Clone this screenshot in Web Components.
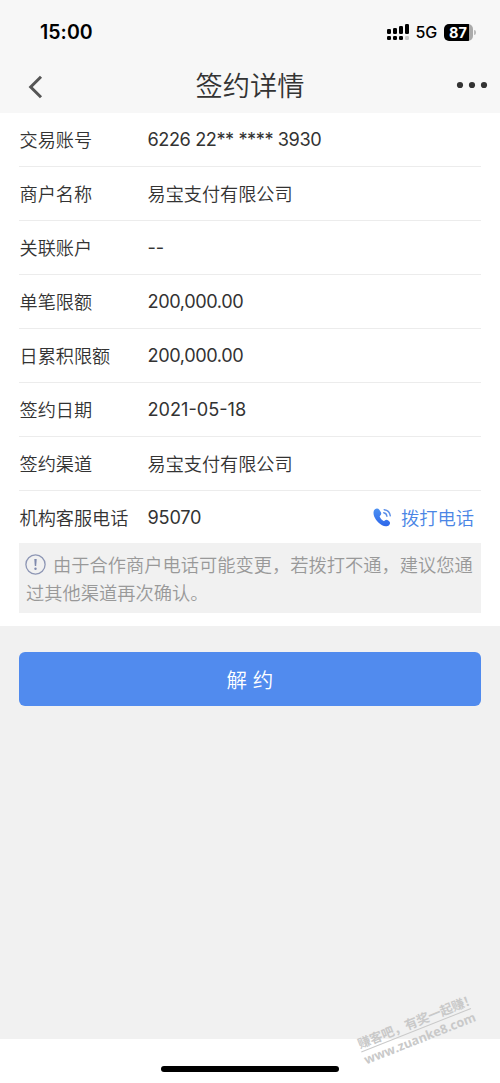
<!DOCTYPE html>
<html lang="zh-CN">
<head>
<meta charset="utf-8">
<title>签约详情</title>
<style>
html,body{margin:0;height:100%;background:#f1f1f1}
</style>
</head>
<body>
<contract-page></contract-page>
<script>
const define = (name, html) => customElements.define(name, class extends HTMLElement {
  constructor() {
    super();
    const t = document.createElement('template');
    t.innerHTML = html;
    this.attachShadow({mode: 'open'}).append(t.content.cloneNode(true));
  }
});

define('status-bar', `
<style>
:host{display:flex;justify-content:space-between;align-items:center;height:64px;padding:0 24px 0 40px;box-sizing:border-box;color:#000;font-family:Inter,"Liberation Sans",sans-serif}
.time{font-size:19.5px;font-weight:600;letter-spacing:.05px}
.right{display:flex;align-items:center}
.net{font-size:16px;margin:0 7px 0 6px;font-weight:500;letter-spacing:-.2px;line-height:20px}
.bat{display:flex;align-items:center;gap:1px}
.cell{width:29px;height:17px;box-sizing:border-box;border-radius:5px;background:linear-gradient(90deg,#000 25px,#aaa 25px);color:#fff;font-size:14.5px;line-height:17px;font-weight:700;padding-left:5px}
.tip{width:2px;height:5px;border-radius:0 2px 2px 0;background:#bbb}
svg{display:block}
</style>
<span class="time">15:00</span>
<div class="right">
<svg width="23" height="17" viewBox="0 0 23 17"><g fill="#000"><rect x="0" y="5" width="4" height="5" rx="1.3"/><rect x="6" y="4" width="4" height="6" rx="1.3"/><rect x="12" y="2" width="4" height="8" rx="1.3"/><rect x="18" y="0" width="4" height="10" rx="1.3"/><rect x="0" y="12" width="4" height="4" rx="1.3"/><rect x="6" y="12" width="4" height="4" rx="1.3"/><rect x="12" y="12" width="4" height="4" rx="1.3"/></g><rect x="18" y="12" width="4" height="4" rx="1.3" fill="#c8c8c8"/></svg>
<span class="net">5G</span>
<div class="bat"><div class="cell">87</div><div class="tip"></div></div>
</div>`);

define('nav-bar', `
<style>
:host{display:grid;grid-template-columns:100px 1fr 100px;height:49px;color:#333}
.title{text-align:center;font-size:27.2px;line-height:45px;font-weight:350}
.back{padding:11px 0 0 28px}
.more{padding:17px 12px 0 0;justify-self:end}
svg{display:block}
</style>
<div class="back"><svg width="15" height="24" viewBox="0 0 15 24"><path d="M13 1.700 2.700 12 13 22.300" fill="none" stroke="#555" stroke-width="3"/></svg></div>
<div class="title"><slot></slot></div>
<div class="more"><svg width="32" height="8" viewBox="0 0 32 8" fill="#333"><circle cx="4" cy="4" r="3.100"/><circle cx="16" cy="4" r="3.100"/><circle cx="28" cy="4" r="3.100"/></svg></div>`);

define('detail-row', `
<style>
:host{display:flex;height:54px;box-sizing:border-box;border-bottom:1px solid #ececec;align-items:center;font-size:18.150px;font-weight:350;color:#333;white-space:nowrap;padding-bottom:1px}
:host([last]){border:0;height:53px;margin-bottom:-1px}
.label{width:128px;padding-left:.5px;flex:none}
.value{flex:1;letter-spacing:var(--tracking,0);font-weight:var(--weight,350)}
</style>
<span class="label"><slot name="label"></slot></span><span class="value"><slot></slot></span><slot name="action"></slot>`);

define('call-link', `
<style>
:host{display:flex;align-items:center;color:#4a85e5;gap:9px;margin-right:7px;font-size:18.300px}
svg{display:block}
</style>
<svg width="19" height="19" viewBox="0 0 19 19"><defs><linearGradient id="g" x1="0" y1="0" x2="0" y2="1"><stop offset="0" stop-color="#4d91f2"/><stop offset="1" stop-color="#2d66ea"/></linearGradient></defs><path d="M2 1.200C3.400.1 5.300.3 6.300 1.700l1.600 2.500c.7 1.200.4 2.400-.6 3.200-.7.6-.7 1.100-.3 1.900.8 1.500 1.600 2.400 2.800 3.300.7.6 1.300.5 1.900-.1 1-.9 2.200-1 3.300-.2l1.100.9c1.300 1 1.200 2.600.1 3.700-1.800 1.900-4.600 1.900-7.200.3C4.300 14.700.6 9.500.5 5.100.5 3.300.900 2 2 1.200Z" fill="url(#g)"/><g fill="none" stroke="#5b8fe8" stroke-width="1.400" stroke-linecap="round"><path d="M10.700 4.700c1.900.3 3 1.500 3.200 3.500"/><path d="M11.200 1.700c3.600.5 5.700 2.700 6.100 6.200"/></g></svg>
<span><slot></slot></span>`);

define('notice-box', `
<style>
:host{display:block;height:70px;box-sizing:border-box;background:#f1f1f1;padding:8px 0 0 7px;color:#999;font-size:18.250px;line-height:28px;font-weight:350;white-space:nowrap}
.line{display:flex;align-items:center;height:28px}
svg{display:block;margin:-2px 7px 0 -1px}
</style>
<div class="line"><svg width="21" height="21" viewBox="0 0 21 21"><circle cx="10.500" cy="10.500" r="9.600" fill="none" stroke="#8d96b4" stroke-width="1.300"/><path d="M9.300 5h2.400l-.5 7h-1.400z" fill="#7f8aad"/><circle cx="10.500" cy="14.800" r="1.200" fill="#7f8aad"/></svg><slot name="first"></slot></div>
<div class="line"><slot></slot></div>`);

define('primary-button', `
<style>
:host{display:block;margin:26px 19px 0}
button{display:block;width:100%;height:54px;border:0;border-radius:6px;background:#518bee;color:#fff;font:350 20.500px/54px Inter,"Noto Sans CJK SC",sans-serif;padding:2px 0 0}
</style>
<button><slot></slot></button>`);

define('site-watermark', `
<style>
:host{position:absolute;left:357px;top:1012px;width:122px;transform:rotate(-21.700deg);color:#c9c9c9;font-weight:700;white-space:nowrap}
.top{font:700 12.800px/17px "Noto Sans CJK SC",sans-serif;border-bottom:1px solid #c9c9c9;width:118px;letter-spacing:-.2px}
.url{font:700 12.600px/17px "Open Sans","Noto Sans",sans-serif}
</style>
<div class="top">赚客吧，有奖一起赚！</div>
<div class="url">www.zuanke8.com</div>`);

define('contract-page', `
<style>
:host{display:flex;flex-direction:column;position:relative;width:500px;height:1083px;overflow:hidden;background:#f1f1f1;font-family:Inter,"Noto Sans CJK SC",sans-serif}
header{background:#f7f7f7;height:113px}
main{flex:1}
section{background:#fff;height:513px;padding:0 19px;box-sizing:border-box}
footer{height:44px;background:#fff;display:flex;justify-content:center;align-items:flex-end}
.home{width:178px;height:6px;border-radius:3px;background:#000;margin-bottom:11px}
.card{--tracking:-.420px;--weight:400}
.amount{--tracking:-.400px;--weight:400}
.date{--weight:400}
.phone{--tracking:-.200px;--weight:400}
</style>
<header><status-bar></status-bar><nav-bar>签约详情</nav-bar></header>
<main>
<section>
<detail-row class="card"><span slot="label">交易账号</span>6226 22** **** 3930</detail-row>
<detail-row><span slot="label">商户名称</span>易宝支付有限公司</detail-row>
<detail-row class="date"><span slot="label">关联账户</span>--</detail-row>
<detail-row class="amount"><span slot="label">单笔限额</span>200,000.00</detail-row>
<detail-row class="amount"><span slot="label">日累积限额</span>200,000.00</detail-row>
<detail-row class="date"><span slot="label">签约日期</span>2021-05-18</detail-row>
<detail-row><span slot="label">签约渠道</span>易宝支付有限公司</detail-row>
<detail-row last class="phone"><span slot="label">机构客服电话</span>95070<call-link slot="action">拨打电话</call-link></detail-row>
<notice-box><span slot="first">由于合作商户电话可能变更，若拨打不通，建议您通</span>过其他渠道再次确认。</notice-box>
</section>
<primary-button>解 约</primary-button>
</main>
<footer><div class="home"></div></footer>
<site-watermark></site-watermark>`);
</script>
</body>
</html>
